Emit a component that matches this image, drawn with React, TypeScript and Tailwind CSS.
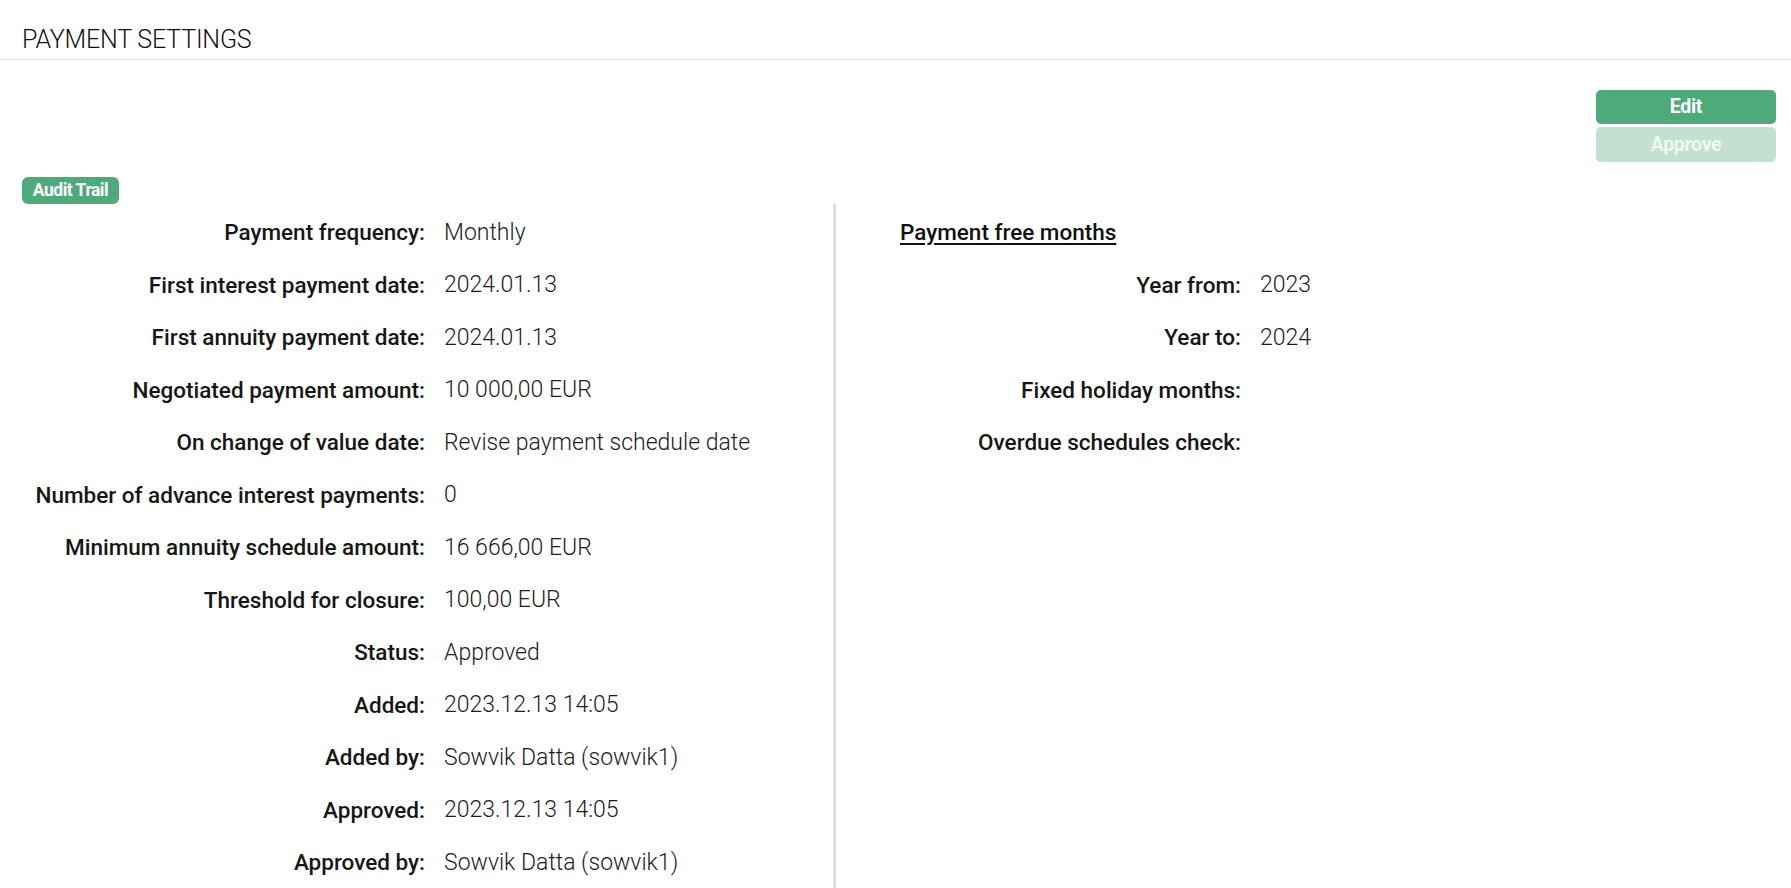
import React from "react";

const LEFT_ROWS: [string, string][] = [
  ["Payment frequency:", "Monthly"],
  ["First interest payment date:", "2024.01.13"],
  ["First annuity payment date:", "2024.01.13"],
  ["Negotiated payment amount:", "10 000,00 EUR"],
  ["On change of value date:", "Revise payment schedule date"],
  ["Number of advance interest payments:", "0"],
  ["Minimum annuity schedule amount:", "16 666,00 EUR"],
  ["Threshold for closure:", "100,00 EUR"],
  ["Status:", "Approved"],
  ["Added:", "2023.12.13 14:05"],
  ["Added by:", "Sowvik Datta (sowvik1)"],
  ["Approved:", "2023.12.13 14:05"],
  ["Approved by:", "Sowvik Datta (sowvik1)"],
];

const RIGHT_ROWS: [string, string][] = [
  ["Year from:", "2023"],
  ["Year to:", "2024"],
  ["Fixed holiday months:", ""],
  ["Overdue schedules check:", ""],
];

function Row({ label, value, labelWidth }: { label: string; value: string; labelWidth: string }) {
  return (
    <div className="flex h-[52.5px] items-center">
      <div className={`${labelWidth} shrink-0 text-right text-[22.5px] font-medium text-[#161616]`}>{label}</div>
      <div className="pl-[19px] text-[23px] font-light text-[#1c1c1c]">{value}</div>
    </div>
  );
}

export default function App() {
  return (
    <div className="min-h-screen bg-white font-['Roboto',sans-serif] leading-none">
      <div className="h-[60px] border-b border-[#e2e2e2] pl-[22px] pt-[27px]">
        <h1 className="text-[25px] font-light tracking-[-0.2px] text-[#111]">PAYMENT SETTINGS</h1>
      </div>

      <div className="flex flex-col items-end pr-[15px] pt-[30px]">
        <button className="h-[34px] w-[180px] rounded-[5px] bg-[#4ea97b] text-[19.5px] font-bold tracking-[-0.3px] text-white">
          Edit
        </button>
        <button className="mt-[3px] h-[35px] w-[180px] rounded-[5px] bg-[#c3e1d1] text-[19.5px] font-bold tracking-[-0.3px] text-[#eef7f2]">
          Approve
        </button>
      </div>

      <div className="pl-[22px] pt-[15px]">
        <span className="inline-flex h-[27px] w-[97px] items-center justify-center rounded-[6px] bg-[#4ea97b] text-[17.5px] font-bold tracking-[-0.5px] text-white">
          Audit Trail
        </span>
      </div>

      <div className="flex">
        <div className="w-[833px] shrink-0 pt-[2px]">
          {LEFT_ROWS.map(([l, v]) => (
            <Row key={l} label={l} value={v} labelWidth="w-[425px]" />
          ))}
        </div>
        <div className="w-[3px] shrink-0 self-stretch bg-[#dedede]" />
        <div className="pl-[64px] pt-[2px]">
          <div className="flex h-[52.5px] items-center">
            <span className="text-[22.5px] font-medium text-[#111] underline underline-offset-[3px]">
              Payment free months
            </span>
          </div>
          {RIGHT_ROWS.map(([l, v]) => (
            <Row key={l} label={l} value={v} labelWidth="w-[341px]" />
          ))}
        </div>
      </div>
    </div>
  );
}
